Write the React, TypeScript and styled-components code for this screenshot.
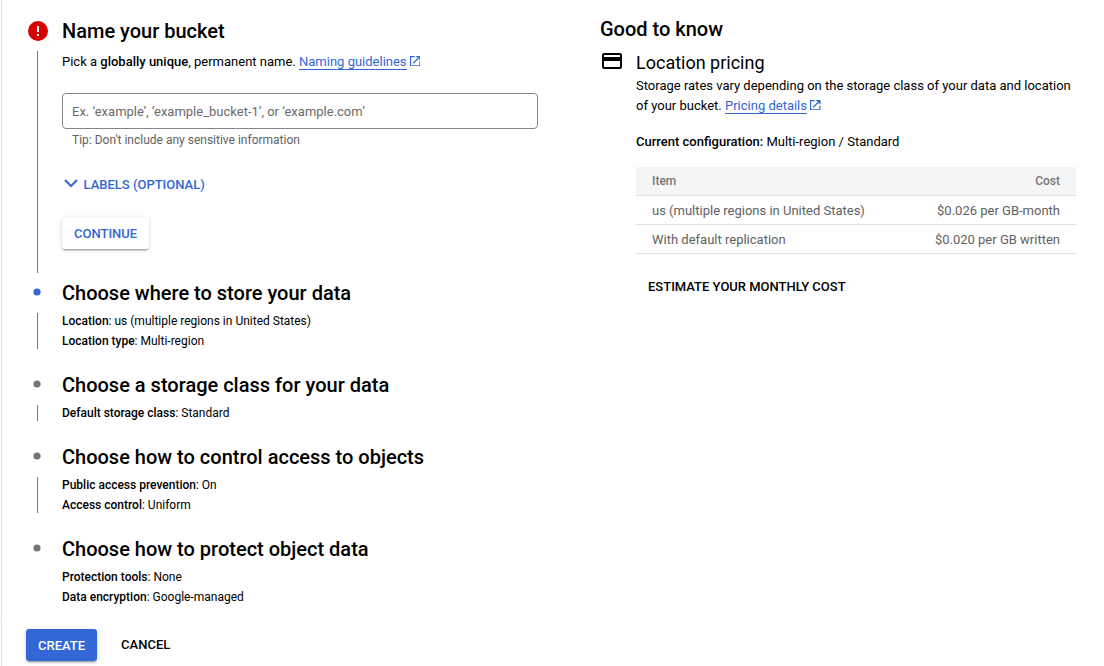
import React from "react";
import styled, { createGlobalStyle } from "styled-components";

const Global = createGlobalStyle`
  *, *::before, *::after { box-sizing: border-box; }
  body {
    margin: 0;
    background: #fff;
    color: #000;
    font-family: Roboto, "Liberation Sans", sans-serif;
    font-size: 13px;
    line-height: 20px;
    overflow: hidden;
  }
`;

const Page = styled.div`
  display: flex;
  height: 666px;
`;

const Gutter = styled.div`
  width: 2px;
  flex: none;
  padding-top: 621px;
  border-right: 1px solid #e0e0e0;
`;

const GutterRule = styled.div`
  height: 1px;
  background: #e0e0e0;
`;

const FormColumn = styled.main`
  width: 536px;
  flex: none;
  margin-left: 24px;
  padding-top: 19px;
  margin-right: 38px;
`;

const StepRow = styled.section<{ $gap: number }>`
  display: flex;
  width: 512px;
  margin-bottom: ${(p) => p.$gap}px;
`;

const Rail = styled.div`
  display: flex;
  flex-direction: column;
  width: 36px;
  flex: none;

  svg { display: block; flex: none; }
`;

const RailLine = styled.div`
  width: 1px;
  flex: 1;
  margin: 8px 0 2px 11px;
  background: #757575;
`;

const StepBody = styled.div`
  flex: 1;
`;

const StepTitle = styled.h2`
  margin: 0 0 6px;
  font-size: 20px;
  font-weight: 500;
  line-height: 24px;
  white-space: nowrap;
`;

const Summary = styled.p`
  margin: 0;
  font-size: 12px;
  line-height: 20px;
`;

const Text = styled.p`
  margin: 0;
  white-space: nowrap;
`;

const Intro = styled(Text)`
  padding-top: 3px;
`;

const Strong = styled.b`
  font-weight: 500;
`;

const Link = styled.a`
  color: #3367d6;
  text-decoration: none;

  span {
    border-bottom: 1px solid #3367d6;
  }

  svg {
    margin-left: 3px;
    vertical-align: 0;
  }
`;

const NameInput = styled.input`
  display: block;
  width: 476px;
  height: 36px;
  margin-top: 21px;
  padding: 0 9px;
  border: 1px solid #80868b;
  border-radius: 4px;
  font: 400 13px Roboto, "Liberation Sans", sans-serif;
  outline: none;

  &::placeholder { color: #6b6b6b; opacity: 1; }
`;

const Hint = styled.p`
  margin: 1px 0 0 10px;
  font-size: 12px;
  line-height: 20px;
  color: #616161;
`;

const Expander = styled.button`
  display: flex;
  align-items: center;
  height: 32px;
  margin: 18px 0 17px;
  padding: 0;
  border: 0;
  background: none;
  color: #3367d6;
  font: 500 13px Roboto, "Liberation Sans", sans-serif;

  svg { margin: -2px 3.5px 0 0; }
`;

const Button = styled.button<{ $kind: "raised" | "primary" | "text" }>`
  height: 32px;
  padding: ${(p) => (p.$kind === "text" ? "0 12px" : "1px 12px 0")};
  border: 0;
  border-radius: 3px;
  font: 500 13px Roboto, "Liberation Sans", sans-serif;
  line-height: ${(p) => (p.$kind === "text" ? 32 : 31)}px;
  white-space: nowrap;
  background: ${(p) => (p.$kind === "primary" ? "#3367d6" : p.$kind === "raised" ? "#fff" : "none")};
  color: ${(p) => (p.$kind === "primary" ? "#fff" : p.$kind === "raised" ? "#3367d6" : "#000")};
  box-shadow: ${(p) =>
    p.$kind === "text"
      ? "none"
      : "0 3px 1px -2px rgba(0,0,0,.2), 0 2px 2px 0 rgba(0,0,0,.14), 0 1px 5px 0 rgba(0,0,0,.12)"};
`;

const ContinueRow = styled.div`
  height: 58px;
`;

const Actions = styled.div`
  display: flex;
  gap: 12px;
`;

const InfoColumn = styled.aside`
  width: 476px;
  flex: none;
  padding-top: 17px;
`;

const InfoTitle = styled.h2`
  margin: 0;
  font-size: 20px;
  font-weight: 500;
  line-height: 24px;
`;

const InfoRow = styled.div`
  display: flex;
  padding-top: 8px;
`;

const InfoIcon = styled.div`
  width: 36px;
  flex: none;

  svg { display: block; }
`;

const InfoBody = styled.div`
  width: 440px;
`;

const InfoHeading = styled.h3`
  margin: 2px 0 1px;
  font-size: 18px;
  font-weight: 400;
  line-height: 24px;
`;

const Configuration = styled(Text)`
  margin: 16px 0 15px;
`;

const PriceTable = styled.table`
  width: 440px;
  margin-bottom: 17px;
  border-collapse: separate;
  border-spacing: 0;
  color: #616161;

  th, td {
    height: 29px;
    padding: 0 16px;
    border-bottom: 1px solid #e0e0e0;
    line-height: 20px;
    text-align: left;
    font-weight: 400;
  }
  td { padding-top: 1px; }
  th {
    background: #f5f5f5;
    color: #757575;
    font-size: 12px;
    font-weight: 500;
  }
  th:last-child, td:last-child { text-align: right; }
`;

const ErrorIcon = () => (
  <svg width="24" height="24" viewBox="0 0 24 24">
    <circle cx="12" cy="12" r="10" fill="#d50000" />
    <path d="M11 7h2v6h-2zM11 15h2v2h-2z" fill="#fff" />
  </svg>
);

const Dot = ({ active }: { active?: boolean }) => (
  <svg width="24" height="24" viewBox="0 0 24 24">
    <circle cx="11" cy="11" r="3.6" fill={active ? "#3367d6" : "#757575"} />
  </svg>
);

const OpenIcon = () => (
  <svg width="10.5" height="10.5" viewBox="0 0 11 11" fill="none" stroke="#3367d6" strokeWidth="1.25">
    <path d="M5 .6H.6v9.8h9.8V6M6.5.6h3.9v3.9M10.2.8 3.4 7.6" />
  </svg>
);

const ChevronIcon = () => (
  <svg width="18" height="18" viewBox="0 0 18 18" fill="none" stroke="#3367d6" strokeWidth="2">
    <path d="M3 6l6 6 6-6" />
  </svg>
);

const CardIcon = () => (
  <svg width="24" height="24" viewBox="0 0 24 24">
    <path d="M20 4H4c-1.11 0-1.99.89-1.99 2L2 18c0 1.11.89 2 2 2h16c1.11 0 2-.89 2-2V6c0-1.11-.89-2-2-2zm0 14H4v-6h16v6zm0-10H4V6h16v2z" />
  </svg>
);

interface StepProps {
  title: string;
  marker: React.ReactNode;
  gap?: number;
  last?: boolean;
  children: React.ReactNode;
}

const Step = ({ title, marker, gap = 22, last, children }: StepProps) => (
  <StepRow $gap={gap}>
    <Rail>
      {marker}
      {!last && <RailLine />}
    </Rail>
    <StepBody>
      <StepTitle>{title}</StepTitle>
      {children}
    </StepBody>
  </StepRow>
);

const steps = [
  {
    title: "Choose where to store your data",
    rows: [["Location", "us (multiple regions in United States)"], ["Location type", "Multi-region"]],
  },
  { title: "Choose a storage class for your data", rows: [["Default storage class", "Standard"]] },
  {
    title: "Choose how to control access to objects",
    rows: [["Public access prevention", "On"], ["Access control", "Uniform"]],
  },
  {
    title: "Choose how to protect object data",
    rows: [["Protection tools", "None"], ["Data encryption", "Google-managed"]],
  },
];

export default function App() {
  return (
    <Page>
      <Global />
      <Gutter>
        <GutterRule />
      </Gutter>
      <FormColumn>
        <Step title="Name your bucket" marker={<ErrorIcon />} gap={6}>
          <Intro>
            Pick a <Strong>globally unique</Strong>, permanent name.{" "}
            <Link><span>Naming guidelines</span><OpenIcon /></Link>
          </Intro>
          <NameInput placeholder="Ex. ‘example’, ‘example_bucket-1’, or ‘example.com’" />
          <Hint>Tip: Don't include any sensitive information</Hint>
          <Expander><ChevronIcon />LABELS (OPTIONAL)</Expander>
          <ContinueRow>
            <Button $kind="raised">CONTINUE</Button>
          </ContinueRow>
        </Step>
        {steps.map((s, i) => (
          <Step key={s.title} title={s.title} marker={<Dot active={i === 0} />} last={i === steps.length - 1}>
            {s.rows.map(([label, value]) => (
              <Summary key={label}><Strong>{label}</Strong>: {value}</Summary>
            ))}
          </Step>
        ))}
        <Actions>
          <Button $kind="primary">CREATE</Button>
          <Button $kind="text">CANCEL</Button>
        </Actions>
      </FormColumn>
      <InfoColumn>
        <InfoTitle>Good to know</InfoTitle>
        <InfoRow>
          <InfoIcon><CardIcon /></InfoIcon>
          <InfoBody>
            <InfoHeading>Location pricing</InfoHeading>
            <Text>
              Storage rates vary depending on the storage class of your data and location
              <br />
              of your bucket. <Link><span>Pricing details</span><OpenIcon /></Link>
            </Text>
            <Configuration><Strong>Current configuration:</Strong> Multi-region / Standard</Configuration>
            <PriceTable>
              <thead>
                <tr><th>Item</th><th>Cost</th></tr>
              </thead>
              <tbody>
                <tr><td>us (multiple regions in United States)</td><td>$0.026 per GB-month</td></tr>
                <tr><td>With default replication</td><td>$0.020 per GB written</td></tr>
              </tbody>
            </PriceTable>
            <Button $kind="text">ESTIMATE YOUR MONTHLY COST</Button>
          </InfoBody>
        </InfoRow>
      </InfoColumn>
    </Page>
  );
}
